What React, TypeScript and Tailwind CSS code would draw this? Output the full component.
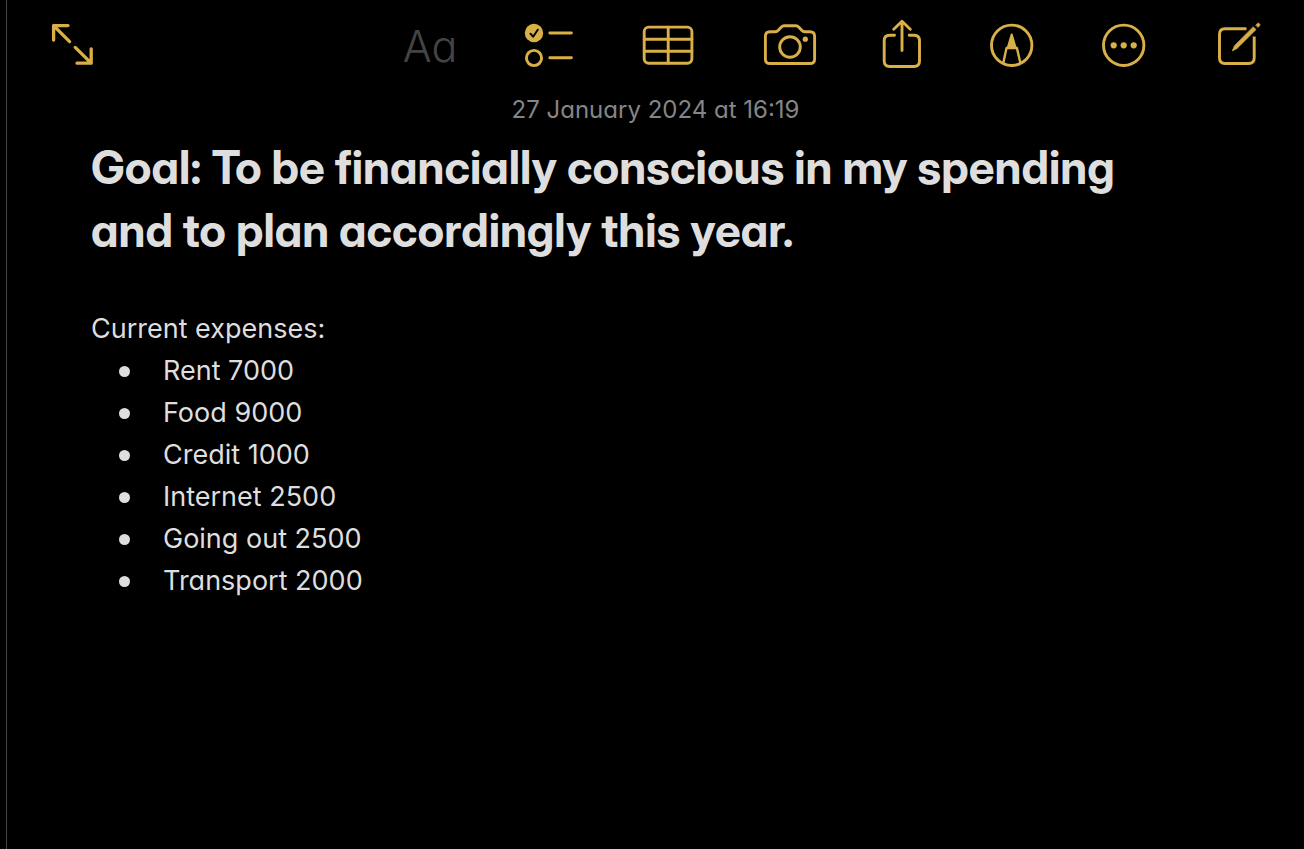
import type { ReactNode } from "react";

const expenses = [
  { name: "Rent", amount: 7000 },
  { name: "Food", amount: 9000 },
  { name: "Credit", amount: 1000 },
  { name: "Internet", amount: 2500 },
  { name: "Going out", amount: 2500 },
  { name: "Transport", amount: 2000 },
];

type ToolProps = { label: string; width: number; children: ReactNode };

function Tool({ label, width, children }: ToolProps) {
  return (
    <button type="button" aria-label={label} className="shrink-0 cursor-pointer">
      <svg
        width={width}
        height={56}
        viewBox={`0 0 ${width} 56`}
        fill="none"
        stroke="currentColor"
        strokeWidth={2.9}
        strokeLinecap="round"
        strokeLinejoin="round"
        aria-hidden="true"
      >
        {children}
      </svg>
    </button>
  );
}

function Toolbar() {
  return (
    <header className="flex items-center justify-between pt-[18px] pr-9 pl-[37px] text-[#d9b048]">
      <Tool label="Expand note" width={56}>
        <g strokeWidth="3.3">
          <path d="M24 7.6H9.6V22M9.6 7.6l16 16" />
          <path d="M33 45.2h14.2V31M47.2 45.2 31.2 29.4" />
        </g>
      </Tool>
      <div className="flex items-center gap-[60px]">
        <button
          type="button"
          aria-label="Text format"
          disabled
          className="w-[60px] text-center text-[43px] leading-[54px] font-light text-[#444444]"
        >
          Aa
        </button>
        <Tool label="Checklist" width={60}>
          <circle cx="14" cy="15" r="9.2" fill="currentColor" stroke="none" />
          <path d="m10.4 15.7 2.7 3 4.7-7" stroke="#000" strokeWidth="2" />
          <circle cx="14" cy="40" r="7.6" />
          <path d="M29.8 15h21.6M29.8 39.8h21.6" />
        </Tool>
        <Tool label="Table" width={60}>
          <rect x="4.2" y="9.1" width="47.7" height="36.2" rx="4.5" />
          <path d="M28.2 9.1v36.2M4.2 21.3h47.7M4.2 33.3h47.7" />
        </Tool>
        <Tool label="Camera" width={58}>
          <path d="M10 13.7h5.2c1.3 0 2.2-.4 3.1-1.4l2.8-3c.9-1 1.9-1.5 3.2-1.5h11.4c1.3 0 2.3.5 3.2 1.5l2.8 3c.9 1 1.8 1.4 3.1 1.4H50c3 0 4.6 1.6 4.6 4.6v22.6c0 3-1.6 4.6-4.6 4.6H10c-3 0-4.6-1.6-4.6-4.6V18.3c0-3 1.6-4.6 4.6-4.6Z" />
          <circle cx="30" cy="29" r="10.3" />
          <circle cx="45.3" cy="21.2" r="2.6" fill="currentColor" stroke="none" />
        </Tool>
        <Tool label="Share" width={48}>
          <path d="M16.5 17.2h-4.8c-3.6 0-5.5 1.9-5.5 5.5V43c0 3.6 1.9 5.5 5.5 5.5H36c3.6 0 5.5-1.9 5.5-5.5V22.7c0-3.6-1.9-5.5-5.5-5.5h-4.8" />
          <path d="M24 32.5v-29M15.7 11.2 24 3.3l8.3 7.9" />
        </Tool>
        <Tool label="Markup" width={52}>
          <circle cx="25.7" cy="27.3" r="20.2" />
          <path d="M25.7 16.4 21.8 29.5h7.8Z" fill="currentColor" strokeWidth="2" />
          <path d="m17.3 45 3.2-15h10.4l3.5 15" strokeWidth="2.4" />
        </Tool>
        <Tool label="More" width={52}>
          <circle cx="25.7" cy="27.3" r="20.2" />
          <g fill="currentColor" stroke="none">
            <circle cx="15.7" cy="27.3" r="3.1" />
            <circle cx="25.7" cy="27.3" r="3.1" />
            <circle cx="35.7" cy="27.3" r="3.1" />
          </g>
        </Tool>
        <Tool label="New note" width={58}>
          <path
            d="M36.5 10.8H15c-3.6 0-5.5 1.9-5.5 5.5V40c0 3.6 1.9 5.5 5.5 5.5h23.7c3.6 0 5.5-1.9 5.5-5.5V18.5"
            strokeLinecap="butt"
          />
          <g fill="currentColor" strokeWidth="0.7">
            <path d="M43.3 8.9 46 11.6 27 30.5 22.3 32.9 24.4 27.9Z" />
            <path d="M45.9 7 47.4 5.5c.5-.5 1.2-.5 1.7 0l.5.5c.5.5.5 1.2 0 1.7L48.1 9.2Z" />
          </g>
        </Tool>
      </div>
    </header>
  );
}

export default function App() {
  return (
    <div className="flex min-h-screen bg-black pl-[6px] font-['Inter','Liberation_Sans',sans-serif] [font-feature-settings:'cv11']">
      <main className="min-w-0 flex-1 border-l border-[#464646] text-[#dedede]">
        <Toolbar />
        <article className="px-[84px]">
          <p className="mt-5 text-center text-2xl leading-8 text-[#858587]">
            27 January 2024 at 16:19
          </p>
          <h1 className="mt-[10px] pr-6 font-['Inter_Display','Inter',sans-serif] text-[46px] leading-[63px] font-bold">
            Goal: To be financially conscious in my spending and to plan accordingly this year.
          </h1>
          <p className="mt-[46px] text-[27px] leading-[42px]">Current expenses:</p>
          <ul className="text-[27px] leading-[42px]">
            {expenses.map((e) => (
              <li key={e.name} className="flex items-center gap-[33px] pl-7">
                <span className="size-[11px] rounded-full bg-[#dedede]" />
                <span>
                  {e.name} {e.amount}
                </span>
              </li>
            ))}
          </ul>
        </article>
      </main>
    </div>
  );
}
